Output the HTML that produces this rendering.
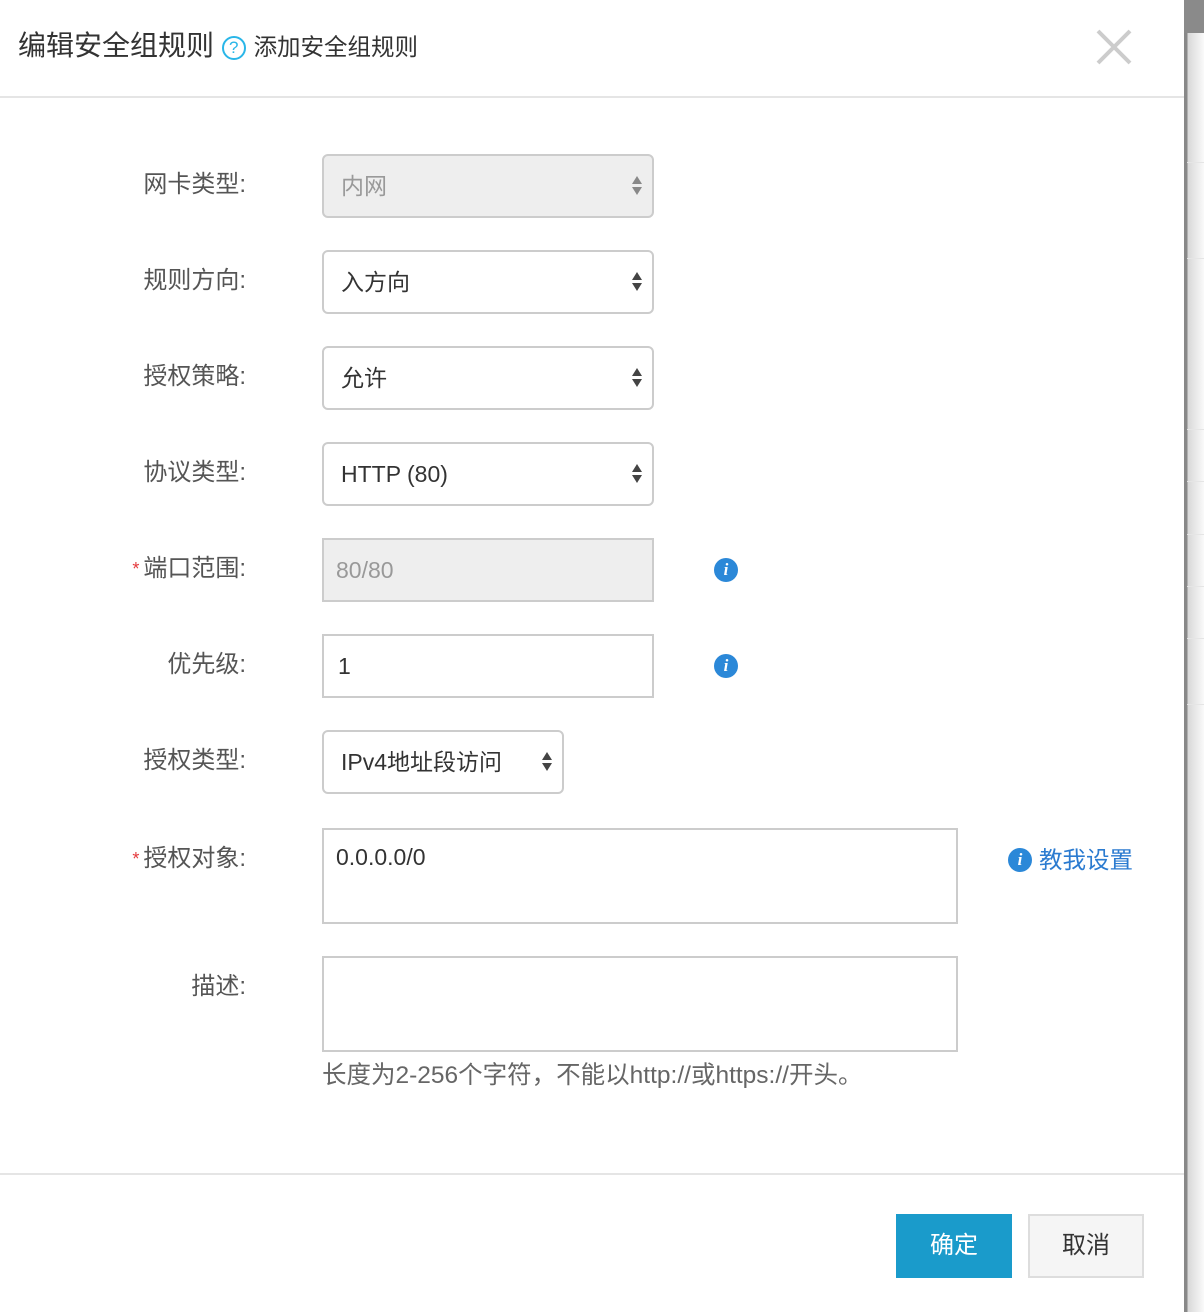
<!DOCTYPE html>
<html><head><meta charset="utf-8"><style>
*{margin:0;padding:0;box-sizing:border-box}
body{width:1204px;height:1312px;position:relative;background:#fff;font-family:"Liberation Sans","Noto Sans CJK SC",sans-serif;overflow:hidden}
.a{position:absolute}
.lbl{position:absolute;right:958px;font-size:24px;color:#555;line-height:30px;white-space:nowrap;margin-top:2px}
.star{color:#e4393c;font-size:18px;margin-right:4px;vertical-align:top}
.box{position:absolute;left:322px;width:332px;height:64px;border:2px solid #ccc;background:#fff;font-size:23px;color:#333;line-height:60px;padding-left:16px}
.sel{border-radius:6px;padding-left:17px}
.dis{background:#eee;color:#999}
.arr{position:absolute;top:20px;width:0;height:0;right:20px}
.arr:before{content:"";position:absolute;left:0;top:0;border-left:5px solid transparent;border-right:5px solid transparent;border-bottom:8px solid #444}
.arr:after{content:"";position:absolute;left:0;top:11px;border-left:5px solid transparent;border-right:5px solid transparent;border-top:8px solid #444}
.dis .arr:before{border-bottom-color:#888}.dis .arr:after{border-top-color:#888}
.info{position:absolute;width:24px;height:24px;border-radius:50%;background:#2b88d8;color:#fff;font:italic bold 17px "Liberation Serif",serif;text-align:center;line-height:24px}
</style></head><body>
<div class="a" style="left:18px;top:27px;font-size:28px;color:#333;line-height:38px;white-space:nowrap">编辑安全组规则 <span style="display:inline-block;width:24px;height:24px;border:2px solid #29b6e8;border-radius:50%;color:#29b6e8;font-size:17px;line-height:20px;text-align:center;vertical-align:2px">?</span> <span style="font-size:23.5px">添加安全组规则</span></div>
<svg class="a" style="left:1096px;top:29px" width="36" height="36"><path d="M2 2L34 34M34 2L2 34" stroke="#ccc" stroke-width="4"/></svg>
<div class="a" style="left:0;top:96px;width:1184px;height:2px;background:#e5e5e5"></div>

<div class="lbl" style="top:168px">网卡类型:</div>
<div class="box sel dis" style="top:154px">内网<span class="arr"></span></div>
<div class="lbl" style="top:264px">规则方向:</div>
<div class="box sel" style="top:250px">入方向<span class="arr"></span></div>
<div class="lbl" style="top:360px">授权策略:</div>
<div class="box sel" style="top:346px">允许<span class="arr"></span></div>
<div class="lbl" style="top:456px">协议类型:</div>
<div class="box sel" style="top:442px">HTTP (80)<span class="arr"></span></div>
<div class="lbl" style="top:552px"><span class="star">*</span>端口范围:</div>
<div class="box dis" style="top:538px;padding-left:12px">80/80</div>
<div class="info" style="left:714px;top:558px">i</div>
<div class="lbl" style="top:648px">优先级:</div>
<div class="box" style="top:634px;padding-left:14px">1</div>
<div class="info" style="left:714px;top:654px">i</div>
<div class="lbl" style="top:744px">授权类型:</div>
<div class="box sel" style="top:730px;width:242px">IPv4地址段访问<span class="arr"></span></div>
<div class="lbl" style="top:842px"><span class="star">*</span>授权对象:</div>
<div class="box" style="top:828px;width:636px;height:96px;line-height:26px;padding:14px 12px">0.0.0.0/0</div>
<div class="info" style="left:1008px;top:848px">i</div>
<div class="a" style="left:1039px;top:845px;font-size:23.5px;color:#2b7bd0;line-height:30px">教我设置</div>
<div class="lbl" style="top:970px">描述:</div>
<div class="box" style="top:956px;width:636px;height:96px"></div>
<div class="a" style="left:322px;top:1061px;font-size:24.5px;color:#666;line-height:30px;white-space:nowrap">长度为2-256个字符，不能以http://或https://开头。</div>

<div class="a" style="left:0;top:1173px;width:1184px;height:2px;background:#e5e5e5"></div>
<div class="a" style="left:896px;top:1214px;width:116px;height:64px;background:#1a9bcb;color:#fff;font-size:24px;line-height:64px;text-align:center">确定</div>
<div class="a" style="left:1028px;top:1214px;width:116px;height:64px;background:#f5f5f5;border:2px solid #ddd;color:#333;font-size:24px;line-height:60px;text-align:center">取消</div>

<div class="a" style="left:1184px;top:0;width:20px;height:1312px;background:linear-gradient(90deg,#888 0,#888 3px,#d8d8d8 4px,#fafafa 20px)"></div>
<div class="a" style="left:1184px;top:0;width:20px;height:33px;background:#8a8a8a"></div>
<div class="a" style="left:1187px;top:162px;width:17px;height:1px;background:#e5e5e5"></div>
<div class="a" style="left:1187px;top:258px;width:17px;height:1px;background:#e5e5e5"></div>
<div class="a" style="left:1187px;top:429px;width:17px;height:1px;background:#e5e5e5"></div>
<div class="a" style="left:1187px;top:481px;width:17px;height:1px;background:#e5e5e5"></div>
<div class="a" style="left:1187px;top:534px;width:17px;height:1px;background:#e5e5e5"></div>
<div class="a" style="left:1187px;top:586px;width:17px;height:1px;background:#e5e5e5"></div>
<div class="a" style="left:1187px;top:638px;width:17px;height:1px;background:#e5e5e5"></div>
<div class="a" style="left:1187px;top:704px;width:17px;height:1px;background:#e5e5e5"></div>
</body></html>
